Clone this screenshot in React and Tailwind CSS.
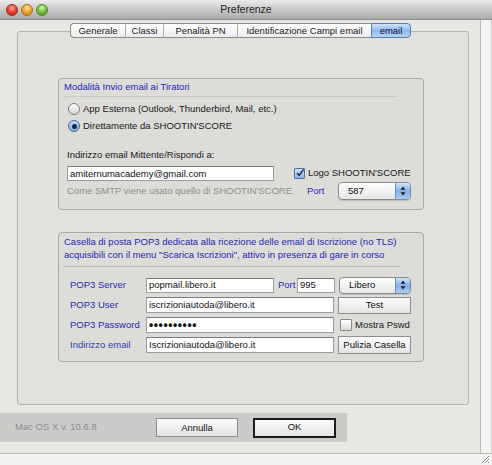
import React from 'react';

const font = "font-['Liberation_Sans',Arial,Helvetica,sans-serif]";

function TrafficLights() {
  return (
    <div className="flex items-center gap-[3px] pl-[6px]">
      <span className="w-[12px] h-[12px] rounded-full border border-[#9a2a20] bg-[radial-gradient(circle_at_50%_30%,#ffb0a0_0%,#e8463a_45%,#b01e12_100%)]" />
      <span className="w-[12px] h-[12px] rounded-full border border-[#a8701a] bg-[radial-gradient(circle_at_50%_30%,#ffe3a0_0%,#f0a830_45%,#c07810_100%)]" />
      <span className="w-[12px] h-[12px] rounded-full border border-[#4f8a28] bg-[radial-gradient(circle_at_50%_30%,#d8f5b0_0%,#7cc444_45%,#468c1e_100%)]" />
    </div>
  );
}

function TitleBar() {
  return (
    <div className="h-[20px] grid grid-cols-[1fr_auto_1fr] items-center bg-gradient-to-b from-[#ebebeb] to-[#a9a9a9] border-b border-[#8f8f8f]">
      <TrafficLights />
      <span className="text-[10.5px] text-[#1e1e1e] leading-none">Preferenze</span>
      <span />
    </div>
  );
}

const tabs = [
  { label: 'Generale', w: 'w-[55px]', first: true },
  { label: 'Classi', w: 'w-[38px]' },
  { label: 'Penalità PN', w: 'w-[74px]' },
  { label: 'Identificazione Campi email', w: 'w-[134px]' },
  { label: 'email', w: 'w-[40px]', selected: true, last: true },
];

function Tabs() {
  return (
    <div className="relative z-10 flex pl-[70px]">
      {tabs.map((t) => (
        <div
          key={t.label}
          className={`${t.w} h-[15px] flex items-center justify-center text-[9.5px] leading-none border-y ${
            t.first ? 'border-l rounded-l-[4px]' : ''
          } ${t.last ? 'border-r rounded-r-[4px]' : ''} ${
            t.selected
              ? 'border-[#5a7db4] bg-gradient-to-b from-[#d2e4fa] via-[#8ebaf0] to-[#b4d4f8] text-[#101828]'
              : 'border-[#8c8c8c] bg-gradient-to-b from-[#ffffff] to-[#ececec] text-[#1a1a1a]'
          } ${!t.first && !t.selected ? 'border-l border-l-[#b0b0b0]' : ''} ${t.selected ? 'border-l' : ''}`}
        >
          {t.label}
        </div>
      ))}
    </div>
  );
}

function Radio({ checked, children }) {
  return (
    <div className="h-[14px] flex items-center">
      {checked ? (
        <span className="w-[12px] h-[12px] rounded-full border border-[#4a6a9e] bg-gradient-to-b from-[#c8dcf4] to-[#86aee2] flex items-center justify-center">
          <span className="w-[5px] h-[5px] rounded-full bg-[#1c2a4a]" />
        </span>
      ) : (
        <span className="w-[12px] h-[12px] rounded-full border border-[#7f7f7f] bg-gradient-to-b from-[#ffffff] to-[#d4d4d4]" />
      )}
      <span className="ml-[3px] text-[9.5px] text-[#1a1a1a]">{children}</span>
    </div>
  );
}

function Checkbox({ checked }) {
  return checked ? (
    <span className="w-[11px] h-[11px] border border-[#56739e] bg-gradient-to-b from-[#cfe0f6] to-[#8ab2e6] flex items-center justify-center rounded-[1px]">
      <svg width="10" height="10" viewBox="0 0 10 10" className="-mt-[2px] ml-[1px]">
        <path d="M1.5 5 L4 8 L9.5 0.5" fill="none" stroke="#1a2238" strokeWidth="1.8" />
      </svg>
    </span>
  ) : (
    <span className="block w-[12px] h-[12px] border border-[#8a8a8a] bg-gradient-to-b from-[#ffffff] to-[#dcdcdc] rounded-[1px]" />
  );
}

function Input({ w, h = 'h-[15px]', children, className = '' }) {
  return (
    <div
      className={`${w} ${h} ${className} bg-white border border-[#9c9c9c] border-t-[#7a7a7a] flex items-center pl-[2px] text-[9.5px] text-[#111] leading-none overflow-hidden whitespace-nowrap`}
    >
      {children}
    </div>
  );
}

function Popup({ w, h, children, className = '' }) {
  return (
    <div
      className={`${w} ${h} ${className} flex rounded-[4px] border border-[#8a8a8a] bg-gradient-to-b from-[#ffffff] to-[#e6e6e6] overflow-hidden shadow-[0_1px_1px_rgba(0,0,0,0.15)]`}
    >
      <span className="flex-1 flex items-center pl-[9px] text-[9.5px] text-[#111]">{children}</span>
      <span className="w-[15px] flex items-center justify-center border-l border-[#6b8cc0] bg-gradient-to-b from-[#d4e6fb] via-[#80b0ec] to-[#a6cbf6]">
        <svg width="6" height="10" viewBox="0 0 6 10">
          <path d="M3 0.5 L5.5 3.8 L0.5 3.8 Z" fill="#1e1e1e" />
          <path d="M3 9.5 L5.5 6.2 L0.5 6.2 Z" fill="#1e1e1e" />
        </svg>
      </span>
    </div>
  );
}

function Button({ w, h, children, className = '' }) {
  return (
    <div
      className={`${w} ${h} ${className} flex items-center justify-center border border-[#8e8e8e] bg-gradient-to-b from-[#fbfbfb] to-[#e4e4e4] text-[9.5px] text-[#111] leading-none`}
    >
      {children}
    </div>
  );
}

function InvioGroup() {
  return (
    <div className="w-[366px] h-[132px] border border-[#a8a8a4] rounded-[4px] bg-[#dcdcd8]">
      <div className="pl-[5px] pt-[2px] text-[9.5px] leading-[12px] text-[#2626b2]">Modalità Invio email ai Tiratori</div>
      <div className="ml-[5px] mt-[3px] w-[334px] h-px bg-[#c8c8c4]" />
      <div className="mt-[5px] pl-[9px] flex flex-col gap-[3px]">
        <Radio>App Esterna (Outlook, Thunderbird, Mail, etc.)</Radio>
        <Radio checked>Direttamente da SHOOTIN'SCORE</Radio>
      </div>
      <div className="mt-[16px] pl-[8px] text-[9.5px] leading-[12px] text-[#1a1a1a]">Indirizzo email Mittente/Rispondi a:</div>
      <div className="mt-[5px] pl-[8px] h-[15px] flex items-center">
        <Input w="w-[207px]">amiternumacademy@gmail.com</Input>
        <span className="ml-[20px]">
          <Checkbox checked />
        </span>
        <span className="ml-[3px] text-[9.5px] text-[#1a1a1a]">Logo SHOOTIN'SCORE</span>
      </div>
      <div className="mt-[1px] pl-[8px] h-[18px] flex items-center text-[9.5px]">
        <span className="w-[240px] text-[#8e8e8e]">Come SMTP viene usato quello di SHOOTIN'SCORE</span>
        <span className="w-[31px] text-[#2a2ab4]">Port</span>
        <Popup w="w-[73px]" h="h-[18px]">587</Popup>
      </div>
    </div>
  );
}

function PopRow({ label, labelColor = 'text-[#2a2ab4]', children }) {
  return (
    <div className="h-[18px] flex items-center">
      <span className={`w-[76px] text-[9.5px] ${labelColor}`}>{label}</span>
      {children}
    </div>
  );
}

function Pop3Group() {
  return (
    <div className="mt-[22px] w-[366px] h-[130px] border border-[#a8a8a4] rounded-[4px] bg-[#dcdcd8]">
      <div className="pl-[5px] pt-[2px] text-[9.5px] leading-[13px] text-[#2626b2]">
        Casella di posta POP3 dedicata alla ricezione delle email di Iscrizione (no TLS)
        <br />
        acquisibili con il menu "Scarica Iscrizioni", attivo in presenza di gare in corso
      </div>
      <div className="ml-[4px] mt-[5px] w-[337px] h-px bg-[#bdbdb9]" />
      <div className="mt-[9px] pl-[11px] flex flex-col gap-[2px]">
        <PopRow label="POP3 Server">
          <Input w="w-[128px]">popmail.libero.it</Input>
          <span className="w-[23px] pl-[4px] text-[9.5px] text-[#2a2ab4]">Port</span>
          <Input w="w-[38px]">995</Input>
          <Popup w="w-[72px]" h="h-[17px]" className="ml-[4px]">
            Libero
          </Popup>
        </PopRow>
        <PopRow label="POP3 User">
          <Input w="w-[188px]" h="h-[16px]">iscrizioniautoda@libero.it</Input>
          <Button w="w-[73px]" h="h-[17px]" className="ml-[4px]">
            Test
          </Button>
        </PopRow>
        <PopRow label="POP3 Password">
          <Input w="w-[188px]" h="h-[16px]">
            <span className="text-[12px] font-bold tracking-[0.6px] leading-none -mt-[1px]">••••••••••</span>
          </Input>
          <span className="ml-[6px]">
            <Checkbox />
          </span>
          <span className="ml-[3px] text-[9.5px] text-[#1a1a1a]">Mostra Pswd</span>
        </PopRow>
        <PopRow label="Indirizzo email" labelColor="text-[#3442a4]">
          <Input w="w-[188px]" h="h-[16px]">Iscrizioniautoda@libero.it</Input>
          <Button w="w-[73px]" h="h-[18px]" className="ml-[4px]">
            Pulizia Casella
          </Button>
        </PopRow>
      </div>
    </div>
  );
}

function Footer() {
  return (
    <div className="mt-[8px] w-[347px] h-[29px] bg-[#cbcbc9] flex items-center">
      <span className="w-[156px] pl-[15px] text-[9.5px] text-[#8c8c8c]">Mac OS X v. 10.6.8</span>
      <Button w="w-[82px]" h="h-[19px]">Annulla</Button>
      <div className="ml-[15px] w-[83px] h-[20px] flex items-center justify-center border-2 border-[#1c1c1c] bg-gradient-to-b from-[#fbfbfb] to-[#e4e4e4] text-[9.5px] text-[#111]">
        OK
      </div>
    </div>
  );
}

export default function App() {
  return (
    <div className={`w-[492px] h-[465px] overflow-hidden bg-[#f3f3f1] ${font}`}>
      <TitleBar />
      <div className="flex">
        <div className="w-[481px] h-[433px] bg-[#e7e7e3] border-r border-[#b9b9b5] pt-[3px]">
          <Tabs />
          <div className="ml-[17px] -mt-[7px] w-[452px] h-[374px] border border-[#b4b4b0] rounded-[3px] bg-[#e1e1dd] pt-[46px] pl-[40px]">
            <InvioGroup />
            <Pop3Group />
          </div>
          <Footer />
        </div>
        <div className="w-[11px] h-[433px] bg-[#f3f3f1] border-r border-[#cfcfcb]" />
      </div>
      <div className="h-[12px] border-t border-[#b9b9b5] flex justify-end items-end">
        <svg width="9" height="9" viewBox="0 0 9 9" className="mr-[2px] mb-[1px]">
          <path d="M8 1 L1 8 M8 4 L4 8 M8 7 L7 8" stroke="#8a8a8a" strokeWidth="1" />
        </svg>
      </div>
    </div>
  );
}
